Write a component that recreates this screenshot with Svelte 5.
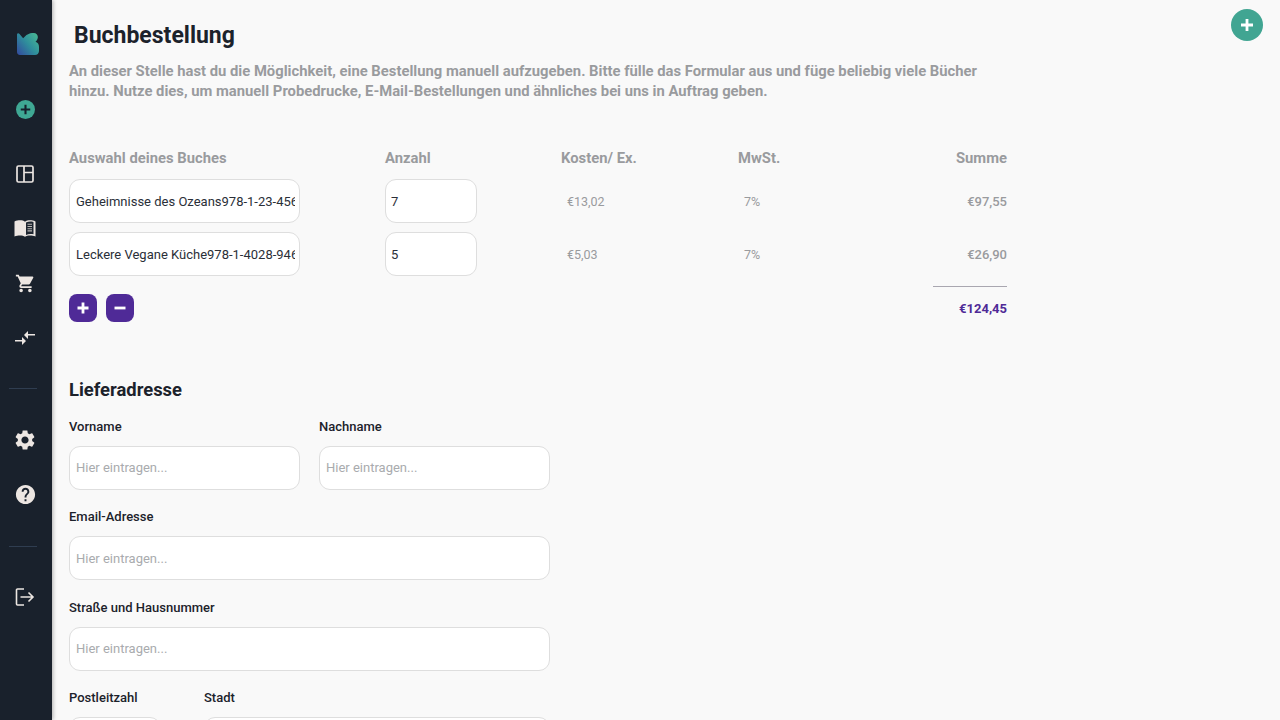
<script lang="ts">
	/** Manual book order page */
	interface OrderRow {
		book: string;
		qty: number;
		cost: string;
		tax: string;
		sum: string;
	}

	const rows: OrderRow[] = [
		{ book: 'Geheimnisse des Ozeans978-1-23-456789-7', qty: 7, cost: '€13,02', tax: '7%', sum: '€97,55' },
		{ book: 'Leckere Vegane Küche978-1-4028-9462-6', qty: 5, cost: '€5,03', tax: '7%', sum: '€26,90' }
	];
</script>

<div class="page">
	<nav class="sidebar">
		<div class="logo">
			<svg width="22" height="22" viewBox="0 0 19 19">
				<defs>
					<linearGradient id="logoGrad" x1="0" y1="1" x2="1" y2="0.2">
						<stop offset="0" stop-color="#33489f" />
						<stop offset="0.55" stop-color="#2f8f9c" />
						<stop offset="1" stop-color="#47b594" />
					</linearGradient>
				</defs>
				<path
					fill="url(#logoGrad)"
					d="M0 1.500C0 .3 1.200-.2 2 .7l3.300 3.800L8.200 1.800 10 .8C11 .2 12 0 13 0h1.500C16.500 0 18 1.500 18 3.500c0 1.500-.7 3-2 4 1.800.7 3 2 3 4.500v3.500c0 2-1.500 3.500-3.500 3.500H2.500C1 19 0 18 0 16.500z"
				/>
			</svg>
		</div>
		<div class="item add">
			<svg width="19" height="19" viewBox="0 0 20 20">
				<circle cx="10" cy="10" r="10" fill="#3fa894" />
				<path d="M10 5v10M5 10h10" stroke="#16202c" stroke-width="2.200" />
			</svg>
		</div>
		<div class="item">
			<svg width="18" height="18" viewBox="0 0 18 18" fill="none" stroke="#ece6e2" stroke-width="1.700">
				<rect x="1" y="1" width="16" height="16" rx="1.500" />
				<path d="M8 1v16M8 7.500h9" />
			</svg>
		</div>
		<div class="item">
			<svg width="22" height="17" viewBox="0 0 22 17">
				<path
					fill="#ece6e2"
					d="M0.500 1.500C2.500.5 4 .3 6 .3c2 0 3.800.4 5 1.400C12.200.7 14 .3 16 .3c2 0 3.500.2 5.500 1.200v15c-1.800-.8-3.500-1-5.500-1-2 0-3.800.4-5 1.300-1.200-.9-3-1.300-5-1.300-2 0-3.700.2-5.500 1z"
				/>
				<path d="M12 2.500c1.300-.7 3-1 4.500-1 1 0 1.800.1 3 .4v12.400c-1-.2-2-.3-3-.3-1.500 0-3.200.3-4.500.9z" fill="#1d2530" />
				<path d="M13.500 4.300h4.500M13.500 6.500h4.500M13.500 8.700h4.500M13.500 10.900h4.500" stroke="#b9b6b4" stroke-width="1.100" />
			</svg>
		</div>
		<div class="item">
			<svg width="21" height="21" viewBox="0 0 24 24" fill="#ece6e2">
				<path
					d="M7 18c-1.100 0-1.990.9-1.990 2S5.900 22 7 22s2-.9 2-2-.9-2-2-2zM1 2v2h2l3.600 7.590-1.350 2.450c-.16.28-.25.61-.25.96 0 1.100.9 2 2 2h12v-2H7.420c-.14 0-.25-.11-.25-.25l.03-.12.9-1.630h7.450c.75 0 1.410-.41 1.750-1.030l3.580-6.490c.08-.14.12-.31.12-.48 0-.55-.45-1-1-1H5.210l-.94-2H1zm16 16c-1.100 0-1.990.9-1.990 2s.89 2 1.990 2 2-.9 2-2-.9-2-2-2z"
				/>
			</svg>
		</div>
		<div class="item">
			<svg width="24" height="24" viewBox="0 0 24 24" fill="#ece6e2">
				<path d="M9.010 14H2v1.500h7.010V19L13 15l-3.990-4v3zm5.980-1v-3.500H22V8h-7.010V5L11 9l3.990 4z" />
			</svg>
		</div>
		<div class="divider"></div>
		<div class="item">
			<svg width="24" height="24" viewBox="0 0 24 24" fill="#ece6e2">
				<path
					d="M19.140 12.940c.04-.3.06-.61.06-.94 0-.32-.02-.64-.07-.94l2.030-1.580c.18-.14.23-.41.12-.61l-1.920-3.320c-.12-.22-.37-.29-.59-.22l-2.390.96c-.5-.38-1.030-.7-1.620-.94l-.36-2.540c-.04-.24-.24-.41-.48-.41h-3.840c-.24 0-.43.17-.47.41l-.36 2.540c-.59.24-1.130.57-1.620.94l-2.390-.96c-.22-.08-.47 0-.59.22L2.740 8.870c-.12.21-.08.47.12.61l2.030 1.580c-.05.3-.09.63-.09.94s.02.64.07.94l-2.030 1.580c-.18.14-.23.41-.12.61l1.920 3.320c.12.22.37.29.59.22l2.390-.96c.5.38 1.030.7 1.620.94l.36 2.540c.05.24.24.41.48.41h3.840c.24 0 .44-.17.47-.41l.36-2.540c.59-.24 1.130-.56 1.620-.94l2.390.96c.22.08.47 0 .59-.22l1.920-3.320c.12-.22.07-.47-.12-.61l-2.010-1.580zM12 15.600c-1.980 0-3.600-1.620-3.600-3.600s1.620-3.600 3.600-3.600 3.600 1.620 3.600 3.600-1.620 3.600-3.600 3.600z"
				/>
			</svg>
		</div>
		<div class="item">
			<svg width="23" height="23" viewBox="0 0 24 24" fill="#ece6e2">
				<path
					d="M12 2C6.480 2 2 6.480 2 12s4.480 10 10 10 10-4.480 10-10S17.520 2 12 2zm1 17h-2v-2h2v2zm2.070-7.750l-.9.92C13.450 12.900 13 13.500 13 15h-2v-.5c0-1.100.45-2.100 1.170-2.830l1.240-1.260c.37-.36.59-.86.59-1.410 0-1.100-.9-2-2-2s-2 .9-2 2H8c0-2.210 1.790-4 4-4s4 1.790 4 4c0 .88-.36 1.680-.93 2.250z"
				/>
			</svg>
		</div>
		<div class="divider lower"></div>
		<div class="item">
			<svg width="20" height="20" viewBox="0 0 20 20" fill="none" stroke="#ece6e2" stroke-width="1.600">
				<path d="M9 2H2.500a1 1 0 0 0-1 1v14a1 1 0 0 0 1 1H9" />
				<path d="M5.500 10H18M13.500 5.500l4.500 4.500-4.500 4.500" />
			</svg>
		</div>
	</nav>

	<main class="content">
		<h1>Buchbestellung</h1>
		<p class="intro">
			An dieser Stelle hast du die Möglichkeit, eine Bestellung manuell aufzugeben. Bitte fülle das Formular aus und füge beliebig viele Bücher
			hinzu. Nutze dies, um manuell Probedrucke, E-Mail-Bestellungen und ähnliches bei uns in Auftrag geben.
		</p>

		<section class="order">
			<div class="order-row head">
				<span>Auswahl deines Buches</span>
				<span>Anzahl</span>
				<span>Kosten/ Ex.</span>
				<span>MwSt.</span>
				<span class="right">Summe</span>
			</div>
			{#each rows as row}
				<div class="order-row line">
					<input class="field book" readonly value={row.book} />
					<input class="field qty" readonly value={row.qty} />
					<span class="cell">{row.cost}</span>
					<span class="cell">{row.tax}</span>
					<span class="cell right strong">{row.sum}</span>
				</div>
			{/each}
			<div class="order-foot">
				<div class="buttons">
					<button type="button" aria-label="Buch hinzufügen">
						<svg width="14" height="14" viewBox="0 0 14 14"><path d="M7 1.500v11M1.500 7h11" stroke="#fff" stroke-width="2.800" /></svg>
					</button>
					<button type="button" aria-label="Buch entfernen">
						<svg width="14" height="14" viewBox="0 0 14 14"><path d="M1.500 7h11" stroke="#fff" stroke-width="2.800" /></svg>
					</button>
				</div>
				<div class="total">€124,45</div>
			</div>
		</section>

		<section class="address">
			<h2>Lieferadresse</h2>
			<div class="form-row">
				<label class="half">Vorname<input class="field" placeholder="Hier eintragen..." /></label>
				<label class="half">Nachname<input class="field" placeholder="Hier eintragen..." /></label>
			</div>
			<div class="form-row">
				<label class="full">Email-Adresse<input class="field" placeholder="Hier eintragen..." /></label>
			</div>
			<div class="form-row">
				<label class="full">Straße und Hausnummer<input class="field" placeholder="Hier eintragen..." /></label>
			</div>
			<div class="form-row">
				<label class="zip">Postleitzahl<input class="field" placeholder="Hier eintragen..." /></label>
				<label class="city">Stadt<input class="field" placeholder="Hier eintragen..." /></label>
			</div>
		</section>
	</main>

	<button type="button" class="fab" aria-label="Neu">
		<svg width="14" height="14" viewBox="0 0 14 14"><path d="M7 1v12M1 7h12" stroke="#fff" stroke-width="2.800" /></svg>
	</button>
</div>

<style>
	:global(body) {
		font-family: Roboto, 'Liberation Sans', sans-serif;
		background: #f9f9f9;
		color: #1c222b;
	}

	.page {
		display: flex;
		height: 100vh;
		overflow: hidden;
	}

	.sidebar {
		flex: 0 0 52px;
		display: flex;
		flex-direction: column;
		background: #19212c;
		box-shadow: 1px 0 4px rgba(0, 0, 0, 0.3);
		z-index: 1;
	}

	.logo {
		display: flex;
		height: 22px;
		margin: 32.500px 0 0 17px;
	}

	.item {
		display: flex;
		align-items: center;
		justify-content: center;
		flex: 0 0 54.500px;
		padding-right: 2px;
		box-sizing: border-box;
	}

	.add {
		margin-top: 27.250px;
		margin-bottom: 10.500px;
	}

	.divider {
		flex: 0 0 1px;
		width: 28px;
		margin: 23px 0 23.500px 9px;
		background: #2f3d50;
	}

	.divider.lower {
		margin-top: 24.500px;
		margin-bottom: 23px;
	}

	.content {
		flex: 1;
		min-width: 0;
		padding: 0 17px;
	}

	h1 {
		margin: 21px 0 0 5px;
		font-size: 23px;
		line-height: 29px;
		font-weight: 700;
		color: #1c222b;
	}

	.intro {
		width: 938px;
		margin: 11px 0 0;
		font-size: 14.800px;
		line-height: 20px;
		font-weight: 700;
		color: #999b9e;
	}

	.order {
		width: 938px;
		margin-top: 47px;
	}

	.order-row {
		display: grid;
		grid-template-columns: 316px 176px 177px 1fr 100px;
		align-items: center;
	}

	.head {
		height: 20px;
		font-size: 14.800px;
		font-weight: 700;
		color: #999b9e;
	}

	.line {
		margin-top: 9px;
	}

	.head + .line {
		margin-top: 11px;
	}

	.right {
		text-align: right;
	}

	.field {
		box-sizing: border-box;
		width: 100%;
		height: 44px;
		padding: 0 6px;
		border: 1px solid #dedede;
		border-radius: 11px;
		background: #fff;
		outline: none;
		font-family: inherit;
		font-size: 13px;
		color: #2a2f38;
	}

	.field::placeholder {
		color: #a9abae;
		opacity: 1;
	}

	.book {
		width: 231px;
		padding-right: 4px;
	}

	.qty {
		width: 92px;
		padding-left: 5px;
	}

	.cell {
		padding-left: 6px;
		font-size: 12.500px;
		color: #999b9e;
	}

	.cell.right {
		padding-left: 0;
		font-size: 13px;
	}

	.strong {
		font-weight: 500;
	}

	.order-foot {
		display: flex;
		justify-content: space-between;
		align-items: flex-start;
		margin-top: 18px;
	}

	.buttons {
		display: flex;
		gap: 9px;
	}

	.buttons button {
		display: flex;
		align-items: center;
		justify-content: center;
		width: 28px;
		height: 28px;
		padding: 0;
		border: 0;
		border-radius: 8px;
		background: #4f2a97;
	}

	.total {
		width: 74px;
		margin-top: -8px;
		padding-top: 14px;
		border-top: 1px solid #a9a7b0;
		text-align: right;
		font-size: 13px;
		font-weight: 700;
		color: #4f2a97;
	}

	.address {
		margin-top: 56px;
	}

	h2 {
		margin: 0;
		font-size: 18.400px;
		line-height: 23px;
		font-weight: 700;
		color: #1c222b;
	}

	.form-row {
		display: flex;
		gap: 19px;
		margin-top: 19.500px;
	}

	.address h2 + .form-row {
		margin-top: 17.750px;
	}

	label {
		display: flex;
		flex-direction: column;
		gap: 11px;
		font-size: 13px;
		line-height: 16px;
		font-weight: 500;
		color: #1c222b;
	}

	label .field {
		font-weight: 400;
	}

	.half {
		width: 231px;
	}

	.full {
		width: 481px;
	}

	.zip {
		width: 92px;
		margin-right: 24px;
	}

	.city {
		width: 346px;
	}

	.fab {
		position: absolute;
		top: 9px;
		right: 17px;
		display: flex;
		align-items: center;
		justify-content: center;
		width: 32px;
		height: 32px;
		padding: 0;
		border: 0;
		border-radius: 50%;
		background: #41a592;
	}
</style>
